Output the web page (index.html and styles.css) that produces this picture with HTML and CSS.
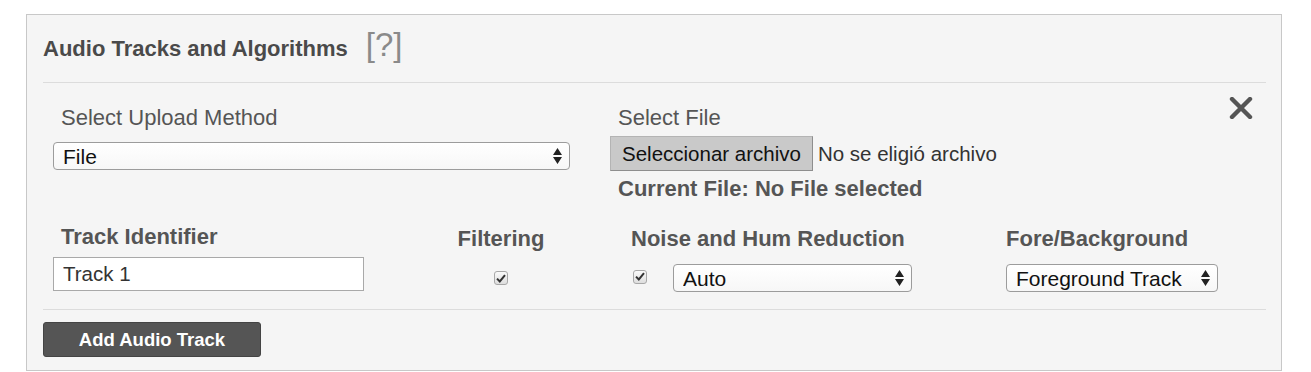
FILE: index.html
```html
<!DOCTYPE html>
<html lang="en">
<head>
    <meta charset="UTF-8">
    <title>Audio Tracks and Algorithms</title>
    <link rel="stylesheet" href="styles.css">
</head>
<body>
    <div class="panel">
        <div class="panel-heading">
            <span class="panel-title">Audio Tracks and Algorithms</span>
            <span class="help">[?]</span>
        </div>

        <div class="track">
            <button class="remove-btn" title="Remove track">
                <svg width="24" height="22" viewBox="0 0 24 22">
                    <path d="M3 2 L21 20 M21 2 L3 20" stroke="#555" stroke-width="4.4" stroke-linecap="round" fill="none"/>
                </svg>
            </button>

            <div class="upload-row">
                <div class="field">
                    <label class="field-label">Select Upload Method</label>
                    <div class="select-wrap method-select">
                        <select>
                            <option>File</option>
                            <option>URL</option>
                        </select>
                        <svg class="arrows" width="9" height="16" viewBox="0 0 9 16"><path d="M0 7 L4.5 0 L9 7 Z M0 9 L9 9 L4.5 16 Z" fill="#222"/></svg>
                    </div>
                </div>
                <div class="field">
                    <label class="field-label">Select File</label>
                    <div class="file-control">
                        <button class="file-btn">Seleccionar archivo</button>
                        <span class="file-name">No se eligió archivo</span>
                    </div>
                    <div class="current-file">Current File: No File selected</div>
                </div>
            </div>

            <div class="options-row">
                <div class="opt">
                    <label class="opt-label ident-label">Track Identifier</label>
                    <input class="ident-input" type="text" value="Track 1">
                </div>
                <div class="opt opt-filter">
                    <label class="opt-label">Filtering</label>
                    <span class="check"><svg width="10" height="9" viewBox="0 0 10 9"><path d="M1 4.6 L3.8 7.4 L9 1.2" stroke="#333" stroke-width="2" fill="none"/></svg></span>
                </div>
                <div class="opt">
                    <label class="opt-label">Noise and Hum Reduction</label>
                    <div class="noise-controls">
                        <span class="check"><svg width="10" height="9" viewBox="0 0 10 9"><path d="M1 4.6 L3.8 7.4 L9 1.2" stroke="#333" stroke-width="2" fill="none"/></svg></span>
                        <div class="select-wrap noise-select">
                            <select>
                                <option>Auto</option>
                                <option>Off</option>
                            </select>
                            <svg class="arrows" width="9" height="16" viewBox="0 0 9 16"><path d="M0 7 L4.5 0 L9 7 Z M0 9 L9 9 L4.5 16 Z" fill="#222"/></svg>
                        </div>
                    </div>
                </div>
                <div class="opt">
                    <label class="opt-label">Fore/Background</label>
                    <div class="select-wrap fore-select">
                        <select>
                            <option>Foreground Track</option>
                            <option>Background Track</option>
                        </select>
                        <svg class="arrows" width="9" height="16" viewBox="0 0 9 16"><path d="M0 7 L4.5 0 L9 7 Z M0 9 L9 9 L4.5 16 Z" fill="#222"/></svg>
                    </div>
                </div>
            </div>
        </div>

        <div class="panel-footer">
            <button class="add-btn">Add Audio Track</button>
        </div>
    </div>
</body>
</html>
```

FILE: styles.css
```css
body {
    margin: 0;
    background: #fff;
    font-family: 'Liberation Sans', Arial, sans-serif;
    color: #555;
}
.panel {
    margin: 14px 0 0 26px;
    width: 1223px;
    padding: 0 15px 13px 16px;
    background-color: #f5f5f5;
    border: 1px solid #c8c8c8;
}
.panel-heading {
    display: flex;
    align-items: baseline;
    height: 34px;
    padding: 13px 0 20px;
    line-height: 34px;
    border-bottom: 1px solid #dcdcdc;
}
.panel-title {
    font-size: 22px;
    font-weight: bold;
    color: #4a4a4a;
}
.help {
    margin-left: 18px;
    font-size: 33px;
    line-height: 34px;
    color: #8a8a8a;
}

/* track block */
.track {
    position: relative;
    padding-bottom: 17px;
    border-bottom: 1px solid #dcdcdc;
}
.remove-btn {
    position: absolute;
    top: 14px;
    right: 13px;
    padding: 0;
    border: none;
    background: none;
    cursor: pointer;
    line-height: 0;
}
.upload-row {
    display: grid;
    grid-template-columns: 517px 1fr;
    column-gap: 40px;
    padding: 22px 0 0 10px;
}
.field-label {
    display: block;
    padding-left: 8px;
    font-size: 22px;
    line-height: 26px;
}
.select-wrap {
    position: relative;
}
.select-wrap select {
    -webkit-appearance: none;
    appearance: none;
    width: 100%;
    height: 28px;
    margin: 0;
    padding: 0 24px 0 9px;
    border: 1px solid #9c9c9c;
    border-radius: 4px;
    background: linear-gradient(#fff, #f7f7f7);
    font-family: inherit;
    font-size: 21px;
    color: #111;
}
.select-wrap .arrows {
    position: absolute;
    right: 8px;
    top: 6px;
    pointer-events: none;
}
.method-select {
    margin-top: 11px;
}
.file-control {
    display: flex;
    align-items: center;
    margin-top: 5px;
}
.file-btn {
    height: 35px;
    padding: 0 11px;
    border: 1px solid #b4b4b4;
    border-right-color: #8e8e8e;
    border-bottom-color: #8e8e8e;
    background-color: #c9c9c9;
    font-family: inherit;
    font-size: 20.5px;
    color: #111;
}
.file-name {
    margin-left: 5px;
    font-size: 20.5px;
    color: #333;
}
.current-file {
    margin-top: 5px;
    padding-left: 8px;
    font-size: 22px;
    line-height: 26px;
    font-weight: bold;
}

.options-row {
    display: grid;
    grid-template-columns: 384px 194px 375px 1fr;
    padding: 24px 0 0 10px;
}
.opt-label {
    display: block;
    font-size: 22px;
    line-height: 26px;
    font-weight: bold;
}
.ident-label {
    padding-left: 8px;
    margin-top: -2px;
    margin-bottom: 2px;
}
.ident-input {
    box-sizing: border-box;
    width: 311px;
    height: 34px;
    margin-top: 5px;
    padding: 0 9px;
    border: 1px solid #a9a9a9;
    background: #fff;
    font-family: inherit;
    font-size: 20.5px;
    color: #333;
}
.opt-filter {
    padding-right: 66px;
    text-align: center;
}
.opt-filter .check {
    margin-top: 19px;
}
.check {
    display: inline-flex;
    align-items: center;
    justify-content: center;
    box-sizing: border-box;
    width: 14px;
    height: 14px;
    border: 1px solid #a8a8a8;
    border-radius: 3px;
    background: linear-gradient(#fafafa, #dedede);
}
.noise-controls {
    display: flex;
    align-items: center;
    margin-top: 12px;
}
.noise-controls .check {
    margin: -3px 0 0 2px;
}
.noise-select {
    width: 239px;
    margin-left: 26px;
}
.fore-select {
    width: 212px;
    margin-top: 12px;
}

.panel-footer {
    padding-top: 12px;
}
.add-btn {
    width: 218px;
    height: 35px;
    border: 1px solid #444;
    border-radius: 3px;
    background-color: #555;
    color: #fff;
    font-family: inherit;
    font-size: 18.5px;
    font-weight: bold;
    cursor: pointer;
}
.add-btn:hover {
    background-color: #444;
}
```
